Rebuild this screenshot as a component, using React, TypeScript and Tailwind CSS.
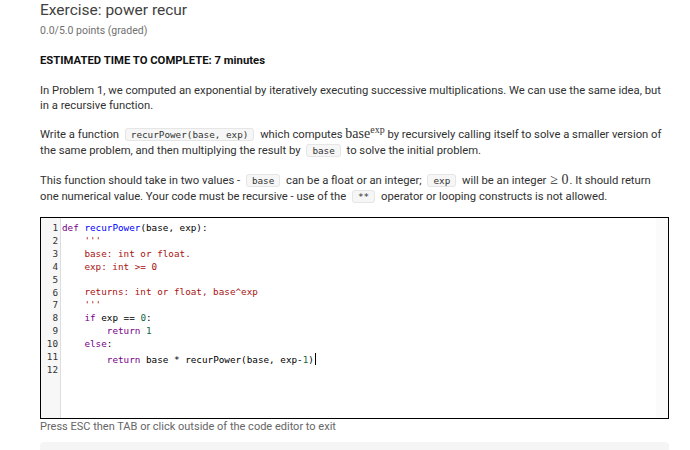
import React from "react";

const mono = "font-['DejaVu_Sans_Mono',monospace]";

function Code({ children }: { children: React.ReactNode }) {
  return (
    <code
      className={`${mono} mx-[3px] rounded-[3px] border border-[#e6e6e6] bg-[#f6f6f6] px-[5px] py-0 text-[9.3px] leading-none text-[#333]`}
    >
      {children}
    </code>
  );
}

// CodeMirror-ish token colours
const kw = "text-[#770088]";
const df = "text-[#0000ff]";
const st = "text-[#aa1111]";
const nm = "text-[#116644]";

const lines: React.ReactNode[] = [
  <>
    <span className={kw}>def</span> <span className={df}>recurPower</span>(base, exp):
  </>,
  <>
    {"    "}
    <span className={st}>'''</span>
  </>,
  <span className={st}>{"    base: int or float."}</span>,
  <span className={st}>{"    exp: int >= 0"}</span>,
  <span className={st}>{"    "}</span>,
  <span className={st}>{"    returns: int or float, base^exp"}</span>,
  <span className={st}>{"    '''"}</span>,
  <>
    {"    "}
    <span className={kw}>if</span> exp == <span className={nm}>0</span>:
  </>,
  <>
    {"        "}
    <span className={kw}>return</span> <span className={nm}>1</span>
  </>,
  <>
    {"    "}
    <span className={kw}>else</span>:
  </>,
  <>
    {"        "}
    <span className={kw}>return</span> base * recurPower(base, exp-<span className={nm}>1</span>)
    <span className="ml-[1px] inline-block h-[12px] w-[1px] translate-y-[2px] bg-black" />
  </>,
  <></>,
];

export default function App() {
  return (
    <div className="h-[450px] w-[690px] overflow-hidden bg-white font-['Roboto',sans-serif] text-[#313131]">
      <div className="w-[669px] pl-[40px]">
        <h2 className="text-[15.5px] leading-[20px] text-[#414141]">Exercise: power recur</h2>
        <div className="mt-[4px] text-[10.5px] leading-[14px] text-[#707070]">0.0/5.0 points (graded)</div>

        <p className="mt-[15px] text-[11.3px] leading-[16px] font-bold text-[#111]">ESTIMATED TIME TO COMPLETE: 7 minutes</p>

        <p className="mt-[14px] text-[11.25px] leading-[15px]">
          In Problem 1, we computed an exponential by iteratively executing successive multiplications. We can use the same
          idea, but in a recursive function.
        </p>

        <p className="mt-[14px] text-[11.25px] leading-[16px]">
          Write a function <Code>recurPower(base, exp)</Code> which computes{" "}
          <span className="font-['Liberation_Serif',serif] text-[14px] leading-none">
            base<sup className="text-[10px] leading-none">exp</sup>
          </span>{" "}
          by recursively calling itself to solve a smaller version of the same problem, and then multiplying the result by{" "}
          <Code>base</Code> to solve the initial problem.
        </p>

        <p className="mt-[14px] text-[11.25px] leading-[16px]">
          This function should take in two values - <Code>base</Code> can be a float or an integer; <Code>exp</Code> will be
          an integer <span className="mx-[1px] font-['Liberation_Serif',serif] text-[14px] leading-none">≥ 0</span>. It
          should return one numerical value. Your code must be recursive - use of the <Code>**</Code> operator or looping
          constructs is not allowed.
        </p>

        <div className="mt-[12px] flex h-[202px] border-[1.5px] border-black">
          <div className={`${mono} w-[20px] shrink-0 border-r border-[#ddd] bg-[#f7f7f7] pt-[4px] pr-[2px] text-right text-[9.3px] leading-[12.9px] text-[#333]`}>
            {lines.map((_, i) => (
              <div key={i}>{i + 1}</div>
            ))}
          </div>
          <div className={`${mono} flex-1 whitespace-pre pl-[1px] pt-[4px] text-[9.3px] leading-[12.9px] text-black`}>
            {lines.map((l, i) => (
              <div key={i} className="h-[12.9px]">
                {l}
              </div>
            ))}
          </div>
          <div className="w-[12px] shrink-0 bg-[#fbfbfb]" />
        </div>

        <div className="text-[11px] leading-[15px] text-[#666]">Press ESC then TAB or click outside of the code editor to exit</div>

        <div className="mt-[8px] h-[20px] rounded-[4px] bg-[#f5f5f5]" />
      </div>
    </div>
  );
}
